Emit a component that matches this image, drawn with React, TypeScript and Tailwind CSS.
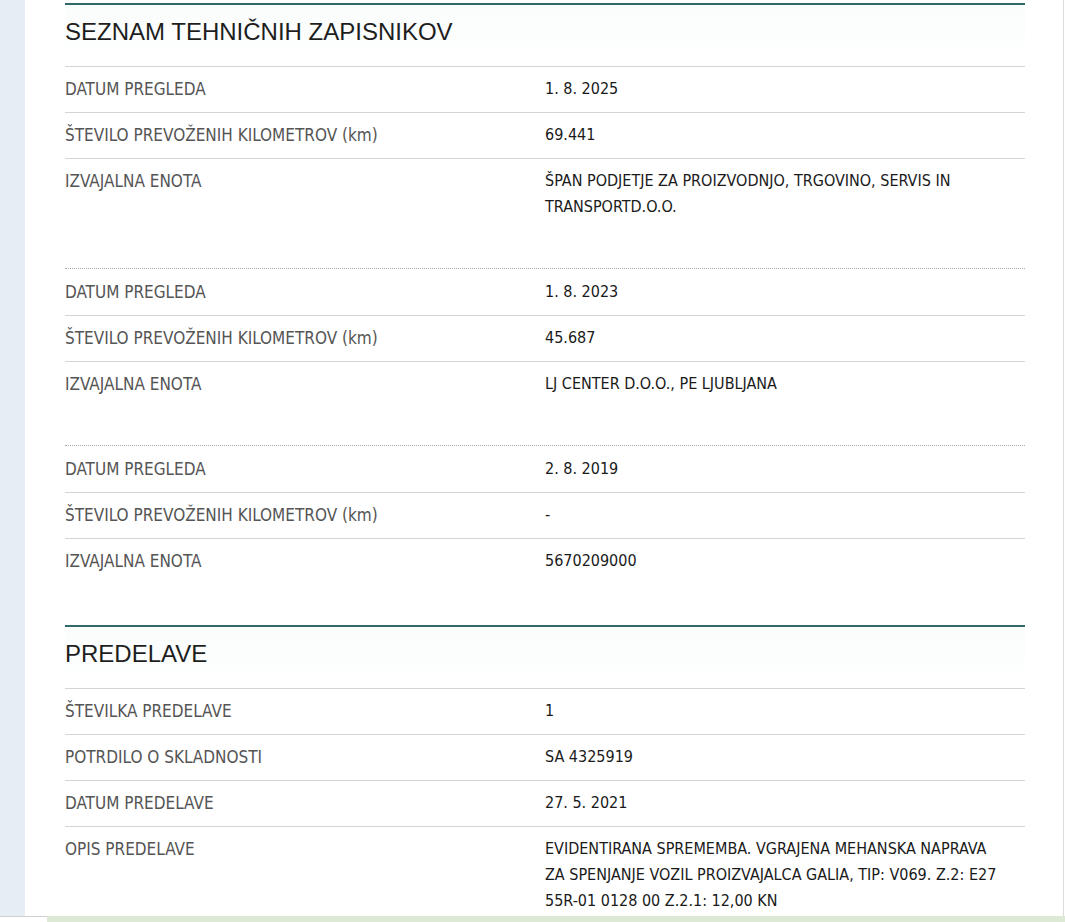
import React from 'react'

type Row = { label: React.ReactNode; value: string }

const zapisniki: Row[][] = [
  [
    { label: 'DATUM PREGLEDA', value: '1. 8. 2025' },
    { label: <>ŠTEVILO PREVOŽENIH KILOMETROV <span className="normal-case">(km)</span></>, value: '69.441' },
    { label: 'IZVAJALNA ENOTA', value: 'ŠPAN PODJETJE ZA PROIZVODNJO, TRGOVINO, SERVIS IN TRANSPORTD.O.O.' },
  ],
  [
    { label: 'DATUM PREGLEDA', value: '1. 8. 2023' },
    { label: <>ŠTEVILO PREVOŽENIH KILOMETROV <span className="normal-case">(km)</span></>, value: '45.687' },
    { label: 'IZVAJALNA ENOTA', value: 'LJ CENTER D.O.O., PE LJUBLJANA' },
  ],
  [
    { label: 'DATUM PREGLEDA', value: '2. 8. 2019' },
    { label: <>ŠTEVILO PREVOŽENIH KILOMETROV <span className="normal-case">(km)</span></>, value: '-' },
    { label: 'IZVAJALNA ENOTA', value: '5670209000' },
  ],
]

const predelave: Row[] = [
  { label: 'ŠTEVILKA PREDELAVE', value: '1' },
  { label: 'POTRDILO O SKLADNOSTI', value: 'SA 4325919' },
  { label: 'DATUM PREDELAVE', value: '27. 5. 2021' },
  {
    label: 'OPIS PREDELAVE',
    value: 'EVIDENTIRANA SPREMEMBA. VGRAJENA MEHANSKA NAPRAVA ZA SPENJANJE VOZIL PROIZVAJALCA GALIA, TIP: V069. Z.2: E27 55R-01 0128 00 Z.2.1: 12,00 KN',
  },
]

function SectionTitle({ children }: { children: React.ReactNode }) {
  return (
    <div className="border-t-2 border-[#30686c] bg-gradient-to-b from-[#f9fdfb] to-white pt-[12px] pb-[19px]">
      <h2 className="text-[24px] leading-[30px] text-[#1e1e1e] font-['Liberation_Sans',sans-serif]">{children}</h2>
    </div>
  )
}

// first = first row after a dotted separator (no solid top border, 1px taller)
function DataRow({ row, first = false }: { row: Row; first?: boolean }) {
  return (
    <div
      className={
        first
          ? 'grid grid-cols-2 pt-[10px] pb-[10px] leading-[26px]'
          : 'grid grid-cols-2 border-t border-[#d4d4d4] pt-[9px] pb-[10px] leading-[26px]'
      }
    >
      <div className="text-[17px] text-[#555555] pr-4">{row.label}</div>
      <div className="max-w-[458px] text-[16px] text-[#1a1a1a]">{row.value}</div>
    </div>
  )
}

export default function App() {
  return (
    <div className="relative h-[922px] overflow-hidden bg-white font-['Liberation_Sans_Narrow','DejaVu_Sans_Condensed',sans-serif]">
      <div className="flex h-[916px]">
        {/* left gutter */}
        <div className="w-[25px] shrink-0 bg-[#e6edf4]" />

        {/* content panel */}
        <div className="w-[1039px] shrink-0 border-r border-[#dcdcdc] pl-[40px] pr-[38px] pt-[3px]">
          {/* Seznam tehničnih zapisnikov */}
          <SectionTitle>SEZNAM TEHNIČNIH ZAPISNIKOV</SectionTitle>
          {zapisniki.map((group, gi) => (
            <div
              key={gi}
              className={gi === 0 ? 'pb-[38px]' : 'border-t border-dotted border-[#a9a9a9] pb-[38px]'}
            >
              {group.map((row, ri) => (
                <DataRow key={ri} row={row} first={gi > 0 && ri === 0} />
              ))}
            </div>
          ))}

          {/* Predelave */}
          <div className="mt-[3px]">
            <SectionTitle>PREDELAVE</SectionTitle>
            {predelave.map((row, i) => (
              <DataRow key={i} row={row} />
            ))}
          </div>
        </div>
      </div>

      {/* bottom strip */}
      <div className="flex h-[6px]">
        <div className="w-[47px] border-t border-[#d0d0d0] bg-white" />
        <div className="flex-1 bg-[#dde9d5]" />
      </div>
    </div>
  )
}
